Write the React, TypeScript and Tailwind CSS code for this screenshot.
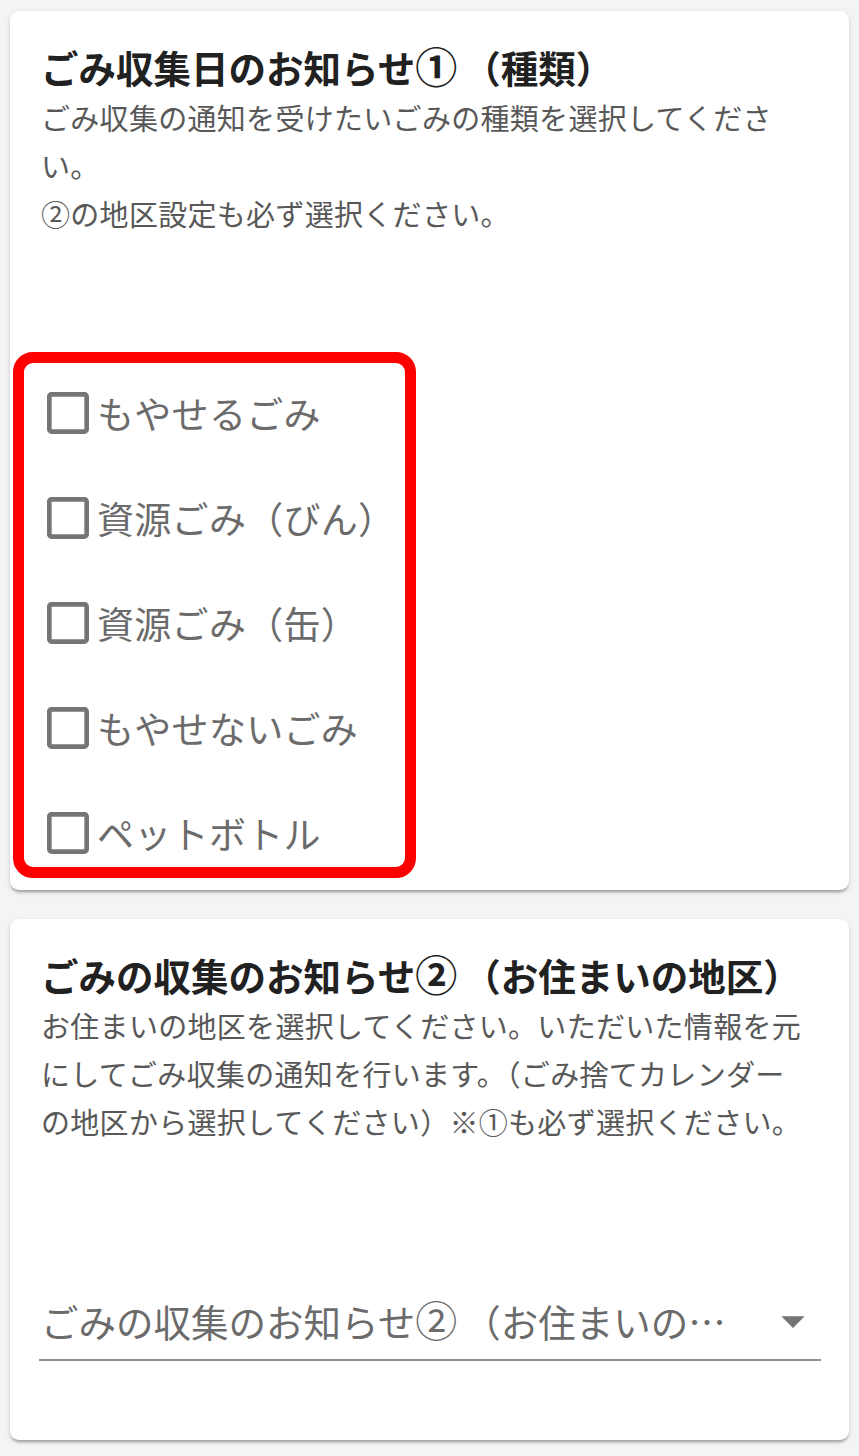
import React from "react";

const options = [
  "もやせるごみ",
  "資源ごみ（びん）",
  "資源ごみ（缶）",
  "もやせないごみ",
  "ペットボトル",
];

function CheckboxIcon() {
  return (
    <svg viewBox="0 0 24 24" className="h-[56px] w-[56px] shrink-0 fill-[#757575]">
      <path d="M19 5v14H5V5h14m0-2H5c-1.11 0-2 .9-2 2v14c0 1.1.89 2 2 2h14c1.1 0 2-.9 2-2V5c0-1.1-.9-2-2-2z" />
    </svg>
  );
}

function ArrowDropDown() {
  return (
    <svg viewBox="0 0 24 24" className="h-[56px] w-[56px] shrink-0 fill-[#757575]">
      <path d="M7 10l5 5 5-5z" />
    </svg>
  );
}

// circled digit drawn a bit larger, as the reference font does
function Circled({ n }: { n: string }) {
  return <span className="text-[42px] leading-[0]">{n}</span>;
}

const font = { fontFamily: '"Noto Sans CJK JP", "Noto Sans", sans-serif' };

export default function App() {
  return (
    <div
      className="min-h-[1456px] bg-[#f3f4f6] px-[10px] pt-[11px] pb-[16px]"
      style={font}
    >
      {/* card 1 */}
      <section className="relative rounded-[9px] bg-white pl-[31px] pr-[24px] pt-[29px] pb-[5px] shadow-[0_4px_3px_-2px_rgba(0,0,0,0.22),0_2px_3px_0_rgba(0,0,0,0.12),0_2px_7px_0_rgba(0,0,0,0.08)]">
        <h2 className="text-[37.5px] font-bold leading-[54px] text-[#212121] whitespace-nowrap">
          ごみ収集日のお知らせ<Circled n="①" />
          <span className="ml-[6px]">（種類）</span>
        </h2>
        <p className="-mt-[1px] text-[29px] leading-[48px] tracking-[0.3px] text-[#585858]">
          <span className="block whitespace-nowrap">ごみ収集の通知を受けたいごみの種類を選択してくださ</span>
          <span className="block whitespace-nowrap">い。</span>
          <span className="block whitespace-nowrap">②の地区設定も必ず選択ください。</span>
        </p>

        <div className="mt-[123px] -ml-[1px] flex flex-col">
          {options.map((label) => (
            <label key={label} className="flex h-[105px] items-center">
              <CheckboxIcon />
              <span className="ml-[1px] text-[37px] leading-[54px] tracking-[0.3px] text-[#6b6b6b] whitespace-nowrap">
                {label}
              </span>
            </label>
          ))}
        </div>

        {/* red highlight frame */}
        <div className="pointer-events-none absolute left-[3px] top-[341px] h-[526px] w-[403px] rounded-[20px] border-[11px] border-[#ff0000]" />
      </section>

      {/* card 2 */}
      <section className="mt-[29px] rounded-[9px] bg-white pl-[31px] pr-[28px] pt-[29px] pb-[79px] shadow-[0_4px_3px_-2px_rgba(0,0,0,0.22),0_2px_3px_0_rgba(0,0,0,0.12),0_2px_7px_0_rgba(0,0,0,0.08)]">
        <h2 className="text-[37.5px] font-bold leading-[54px] text-[#212121] whitespace-nowrap">
          ごみの収集のお知らせ<Circled n="②" />
          <span className="ml-[6px]">（お住まいの地区）</span>
        </h2>
        <p className="-mt-[1px] text-[29px] leading-[48px] tracking-[0.3px] text-[#585858]">
          <span className="block whitespace-nowrap">お住まいの地区を選択してください。いただいた情報を元</span>
          <span className="block whitespace-nowrap">にしてごみ収集の通知を行います。（ごみ捨てカレンダー</span>
          <span className="block whitespace-nowrap">の地区から選択してください）※①も必ず選択ください。</span>
        </p>

        <div className="mt-[148px] -ml-[2px] flex items-center border-b-[2px] border-[#8f8f8f] pb-[10px] pl-[2px]">
          <span className="w-[705px] truncate text-[37.5px] leading-[56px] text-[#6b6b6b]">
            ごみの収集のお知らせ<Circled n="②" />
            <span className="ml-[6px]">（お住まいの地区）</span>
          </span>
          <span className="flex-1" />
          <ArrowDropDown />
        </div>
      </section>
    </div>
  );
}
